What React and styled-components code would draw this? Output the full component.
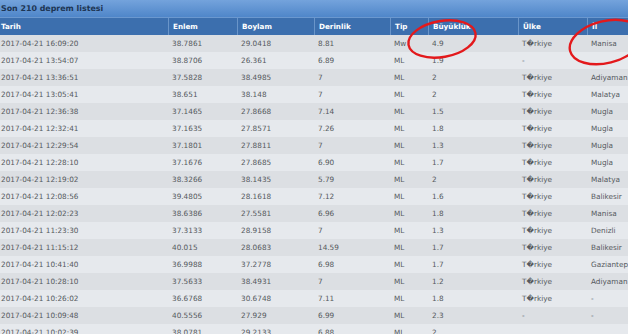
import React from 'react'
import styled, { createGlobalStyle } from 'styled-components'

const GlobalStyle = createGlobalStyle`
  html, body {
    margin: 0;
    padding: 0;
    background: #e4e7eb;
    overflow: hidden;
  }
`;

const Panel = styled.div`
  position: relative;
  width: 628px;
  height: 334px;
  overflow: hidden;
  font-family: "DejaVu Sans", Verdana, sans-serif;
`;

const TitleBar = styled.div`
  height: 17px;
  display: flex;
  align-items: center;
  padding-left: 1px;
  background: linear-gradient(#74a3dc, #4f86c9);
  color: #1d3553;
  font-weight: bold;
  font-size: 7.9px;
`;

const Grid = styled.div`
  display: grid;
  grid-template-columns: 168px 69px 77px 76px 38px 90px 69px 1fr;
`;

const HeadRow = styled(Grid)`
  height: 18px;
  background: #3c6fae;
  border-top: 1px solid #6b98cf;
  box-sizing: border-box;
`;

const HeadCell = styled.div`
  display: flex;
  align-items: center;
  padding-left: ${p => (p.$first ? '1px' : '4px')};
  border-left: ${p => (p.$first ? 'none' : '1px solid #6a95c9')};
  color: #ffffff;
  font-weight: bold;
  font-size: 7.2px;
`;

const Row = styled(Grid)`
  height: 17px;
  background: ${p => (p.$odd ? '#e6e9ed' : '#dcdfe3')};
`;

const Cell = styled.div`
  display: flex;
  align-items: center;
  padding-left: ${p => (p.$first ? '1px' : '4px')};
  color: #55595d;
  font-size: 7.3px;
  white-space: nowrap;
  overflow: hidden;
`;

const Marks = styled.svg`
  position: absolute;
  left: 0;
  top: 0;
  pointer-events: none;
`;

const TR = 'T\uFFFDrkiye';

const heads = ['Tarih', 'Enlem', 'Boylam', 'Derinlik', 'Tip', 'Büyüklük', 'Ülke', 'İl'];

const rows = [
  ['16:09:20', '38.7861', '29.0418', '8.81', 'Mw', '4.9', TR, 'Manisa'],
  ['13:54:07', '38.8706', '26.361', '6.89', 'ML', '1.9', '-', ''],
  ['13:36:51', '37.5828', '38.4985', '7', 'ML', '2', TR, 'Adiyaman'],
  ['13:05:41', '38.651', '38.148', '7', 'ML', '2', TR, 'Malatya'],
  ['12:36:38', '37.1465', '27.8668', '7.14', 'ML', '1.5', TR, 'Mugla'],
  ['12:32:41', '37.1635', '27.8571', '7.26', 'ML', '1.8', TR, 'Mugla'],
  ['12:29:54', '37.1801', '27.8811', '7', 'ML', '1.3', TR, 'Mugla'],
  ['12:28:10', '37.1676', '27.8685', '6.90', 'ML', '1.7', TR, 'Mugla'],
  ['12:19:02', '38.3266', '38.1435', '5.79', 'ML', '2', TR, 'Malatya'],
  ['12:08:56', '39.4805', '28.1618', '7.12', 'ML', '1.6', TR, 'Balikesir'],
  ['12:02:23', '38.6386', '27.5581', '6.96', 'ML', '1.8', TR, 'Manisa'],
  ['11:23:30', '37.3133', '28.9158', '7', 'ML', '1.3', TR, 'Denizli'],
  ['11:15:12', '40.015', '28.0683', '14.59', 'ML', '1.7', TR, 'Balikesir'],
  ['10:41:40', '36.9988', '37.2778', '6.98', 'ML', '1.7', TR, 'Gaziantep'],
  ['10:28:10', '37.5633', '38.4931', '7', 'ML', '1.2', TR, 'Adiyaman'],
  ['10:26:02', '36.6768', '30.6748', '7.11', 'ML', '1.8', TR, '-'],
  ['10:09:48', '40.5556', '27.929', '6.99', 'ML', '2.3', '-', '-'],
  ['10:02:39', '38.0781', '29.2133', '6.88', 'ML', '2', '', ''],
];

export default function App() {
  return (
    <Panel>
      <GlobalStyle />
      <TitleBar>Son 210 deprem listesi</TitleBar>
      <HeadRow>
        {heads.map((h, i) => (
          <HeadCell key={h} $first={i === 0}>{h}</HeadCell>
        ))}
      </HeadRow>
      {rows.map((r, i) => (
        <Row key={i} $odd={i % 2 === 1}>
          <Cell $first>2017-04-21 {r[0]}</Cell>
          {r.slice(1).map((v, j) => (
            <Cell key={j}>{v}</Cell>
          ))}
        </Row>
      ))}
      <Marks width="628" height="334" viewBox="0 0 628 334">
        <ellipse cx="442" cy="39" rx="34" ry="18" transform="rotate(-10 442 39)"
          fill="none" stroke="#e3191c" strokeWidth="2.4" />
        <ellipse cx="606" cy="42" rx="37" ry="21" transform="rotate(-14 606 42)"
          fill="none" stroke="#e3191c" strokeWidth="2.4" />
      </Marks>
    </Panel>
  )
}
